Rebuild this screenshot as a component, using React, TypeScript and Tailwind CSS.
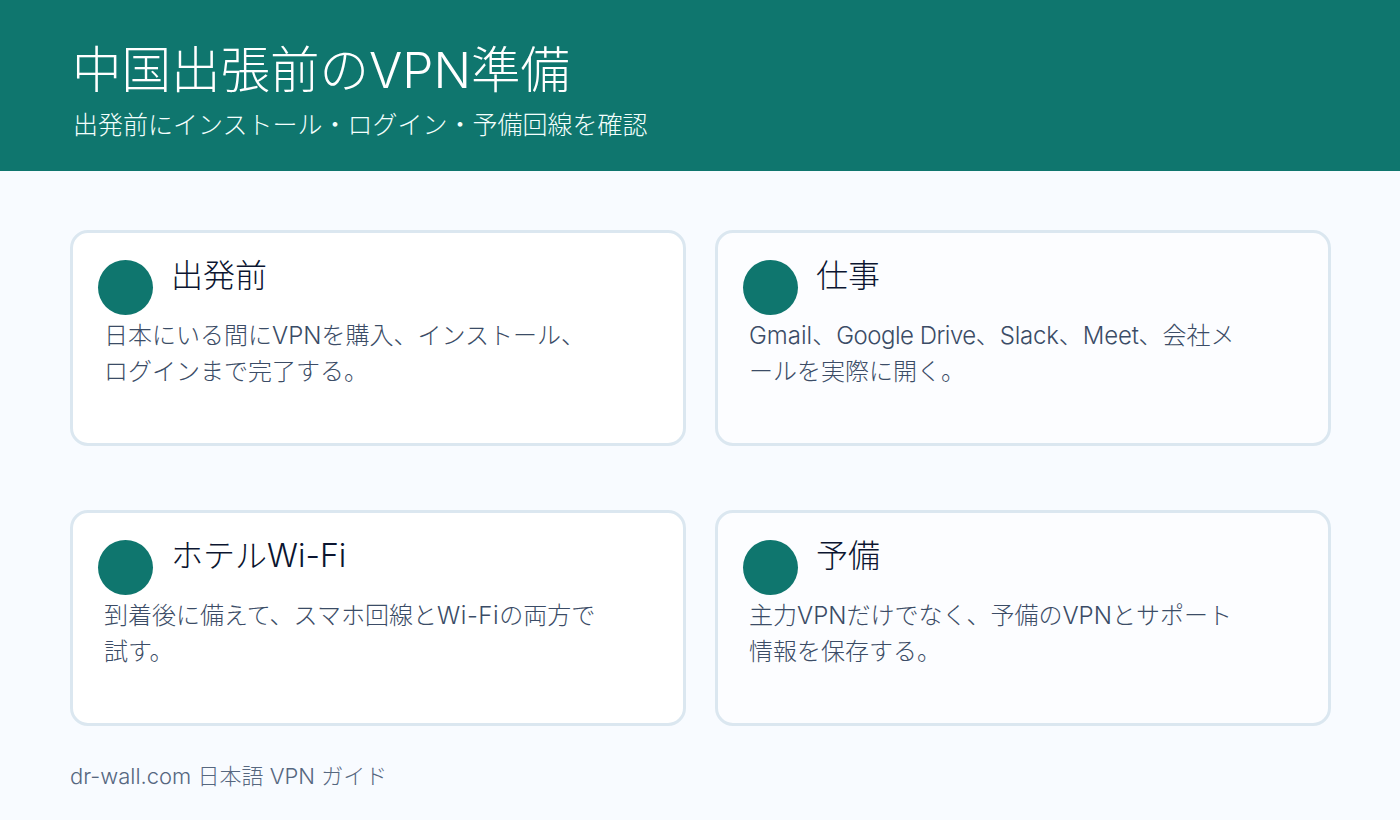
import type { ReactNode } from 'react'

const font = { fontFamily: 'Inter, "Noto Sans CJK JP", sans-serif' }

const cards: { title: string; bg: string; lines: ReactNode[] }[] = [
  { title: '出発前', bg: 'bg-white', lines: ['日本にいる間にVPNを購入、インストール、', 'ログインまで完了する。'] },
  {
    title: '仕事',
    bg: 'bg-[#fcfdff]',
    lines: [
      <>
        Gmail、<span className="tracking-[-0.5px]">Google Drive</span>、<span className="tracking-[-0.2px]">Slack</span>、<span className="tracking-[-0.2px]">Meet</span>、会社メ
      </>,
      'ールを実際に開く。',
    ],
  },
  {
    title: 'ホテルWi-Fi',
    bg: 'bg-white',
    lines: [
      <>
        到着後に備えて、スマホ回線と<span className="tracking-[0.6px]">Wi-Fi</span>の両方で
      </>,
      '試す。',
    ],
  },
  { title: '予備', bg: 'bg-[#fcfdff]', lines: ['主力VPNだけでなく、予備のVPNとサポート', '情報を保存する。'] },
]

function Card({ title, bg, lines }: { title: string; bg: string; lines: ReactNode[] }) {
  return (
    <div className={`h-[216px] rounded-[18px] border-[3px] border-[#dbe7f0] pl-[25px] pt-[27px] ${bg}`}>
      <div className="flex items-start gap-[18px]">
        <div className="h-[55px] w-[55px] rounded-full bg-[#0f766e]" />
        <h2 className="mt-[1px] text-[32px] font-light leading-[30px] text-[#0b1530]">{title}</h2>
      </div>
      <div className="ml-[6px] mt-[3px] text-[24px] font-light leading-[36px] text-[#3b4c66]">
        {lines.map((l, i) => (
          <p key={i} className="whitespace-nowrap">{l}</p>
        ))}
      </div>
    </div>
  )
}

export default function App() {
  return (
    <div className="flex h-[820px] w-[1400px] flex-col overflow-hidden bg-[#f8fbff]" style={font}>
      <header className="h-[171px] bg-[#0f766e] pl-[73px] pt-[40px] text-white">
        <h1 className="-ml-[1px] text-[49.5px] font-light leading-[60px]">中国出張前のVPN準備</h1>
        <p className="mt-[7px] text-[25px] font-light leading-[36px] text-[#f3fffd]">出発前にインストール・ログイン・予備回線を確認</p>
      </header>
      <main className="grid grid-cols-[616px_616px] gap-x-[29px] gap-y-[64px] pl-[70px] pt-[59px]">
        {cards.map(c => (
          <Card key={c.title} {...c} />
        ))}
      </main>
      <footer className="pl-[70px] pt-[34px] text-[22px] font-light leading-[32px] text-[#56677f]">dr-wall.com 日本語 VPN ガイド</footer>
    </div>
  )
}
